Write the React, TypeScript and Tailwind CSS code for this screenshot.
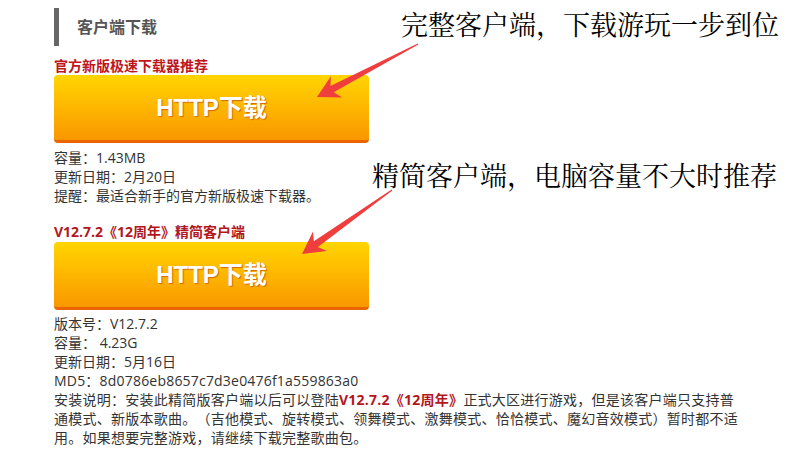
import React from "react";

function arrowPoints(tx: number, ty: number, hx: number, hy: number) {
  const dx = hx - tx;
  const dy = hy - ty;
  const len = Math.sqrt(dx * dx + dy * dy);
  const ux = dx / len;
  const uy = dy / len;
  const nx = -uy;
  const ny = ux;
  const back = (d: number) => [hx - ux * d, hy - uy * d];
  const [wx, wy] = back(22);
  const [jx, jy] = back(17);
  const pts = [
    [tx + nx * 0.6, ty + ny * 0.6],
    [jx + nx * 3.5, jy + ny * 3.5],
    [wx + nx * 12, wy + ny * 12],
    [hx, hy],
    [wx - nx * 12, wy - ny * 12],
    [jx - nx * 3.5, jy - ny * 3.5],
    [tx - nx * 0.6, ty - ny * 0.6],
  ];
  return pts.map((p) => `${p[0].toFixed(2)},${p[1].toFixed(2)}`).join(" ");
}

function DownloadButton() {
  return (
    <div className="flex h-[68px] w-[315px] items-center justify-center rounded-[4px] border-b-[3px] border-[#ec6400] bg-gradient-to-b from-[#ffd500] to-[#f99700]">
      <span
        className="text-[24px] font-bold leading-none text-white [text-shadow:1px_1px_1px_#d26a00]"
        style={{ fontFamily: '"Liberation Sans", "Noto Sans CJK SC", sans-serif' }}
      >
        HTTP下载
      </span>
    </div>
  );
}

export default function App() {
  return (
    <div
      className="relative h-[452px] w-[788px] overflow-hidden bg-white text-[#333] [text-spacing-trim:space-all]"
      style={{ fontFamily: '"Open Sans", "Noto Sans CJK SC", sans-serif' }}
    >
      <div className="w-[750px] pl-[54px] pt-[8px]">
        <div className="flex h-[38px] items-center border-l-[5px] border-[#666] pl-[18px]">
          <span className="text-[16px] font-bold text-[#555]">客户端下载</span>
        </div>

        <div className="mt-[11px] text-[14px] font-bold leading-[18px] text-[#c0161d]">
          官方新版极速下载器推荐
        </div>
        <DownloadButton />
        <div className="mt-[5px] text-[14px] leading-[19px]">
          <div>容量：1.43MB</div>
          <div>更新日期：2月20日</div>
          <div>提醒：最适合新手的官方新版极速下载器。</div>
        </div>

        <div className="mt-[18px] text-[14px] font-bold leading-[18px] text-[#b3161d]">
          V12.7.2《12周年》精简客户端
        </div>
        <div className="mt-[1px]">
          <DownloadButton />
        </div>
        <div className="mt-[4px] w-[690px] text-[14px] leading-[19px]">
          <div>版本号：V12.7.2</div>
          <div>容量： 4.23G</div>
          <div>更新日期：5月16日</div>
          <div className="tracking-[0.2px]">MD5：8d0786eb8657c7d3e0476f1a559863a0</div>
          <div className="tracking-[0.25px]">
            安装说明：安装此精简版客户端以后可以登陆
            <span className="font-bold text-[#b3161d]">V12.7.2《12周年》</span>
            正式大区进行游戏，但是该客户端只支持普通模式、新版本歌曲。（吉他模式、旋转模式、领舞模式、激舞模式、恰恰模式、魔幻音效模式）暂时都不适用。如果想要完整游戏，请继续下载完整歌曲包。
          </div>
        </div>
      </div>

      <div
        className="absolute left-[401px] top-[8px] whitespace-nowrap text-[27px] leading-[32px] text-black"
        style={{ fontFamily: '"Noto Serif CJK SC", "Noto Sans CJK SC", serif' }}
      >
        完整客户端，下载游玩一步到位
      </div>
      <div
        className="absolute left-[372px] top-[159px] whitespace-nowrap text-[27px] leading-[32px] text-black"
        style={{ fontFamily: '"Noto Serif CJK SC", "Noto Sans CJK SC", serif' }}
      >
        精简客户端，电脑容量不大时推荐
      </div>

      <svg className="pointer-events-none absolute left-0 top-0" width="788" height="452">
        <polygon points={arrowPoints(418, 44, 317, 97)} fill="#f03e3e" />
        <polygon points={arrowPoints(392, 190, 302, 254)} fill="#f03e3e" />
      </svg>
    </div>
  );
}
